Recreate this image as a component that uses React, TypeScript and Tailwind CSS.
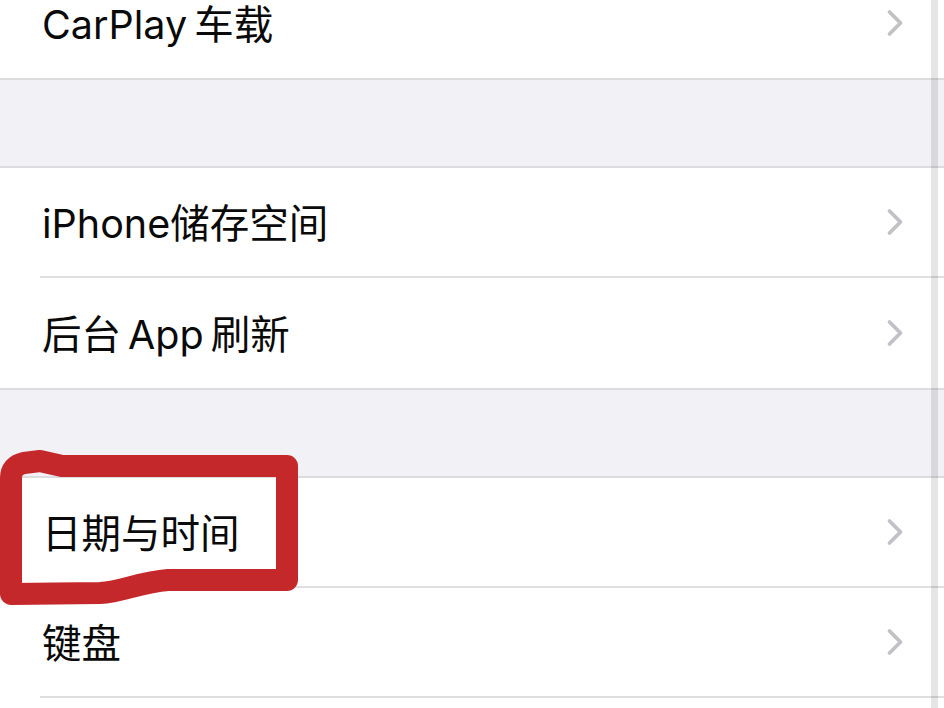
import React from "react";

const rows1 = ["iPhone储存空间", "后台 App 刷新"];
const rows2 = ["日期与时间", "键盘"];

function Chevron() {
  return (
    <svg width="18" height="28" viewBox="0 0 18 28" className="shrink-0">
      <path
        d="M3.5 3 L14.5 14 L3.5 25"
        stroke="#c2c2c6"
        strokeWidth="3.8"
        fill="none"
        strokeLinecap="round"
        strokeLinejoin="round"
      />
    </svg>
  );
}

function Row({ title, last }: { title: string; last?: boolean }) {
  return (
    <div className="pl-[40px] bg-white">
      <div
        className={
          "flex items-center justify-between h-[110px] pl-[2px] pr-[40px] " +
          (last ? "" : "border-b-2 border-[#dfdfe1]")
        }
      >
        <p className="text-[39.5px] text-[#0a0a0a] leading-none pt-[5px] [word-spacing:-4px]">
          {title}
        </p>
        <Chevron />
      </div>
    </div>
  );
}

function Gap() {
  return <div className="h-[90px] bg-[#f2f1f6] border-y-2 border-[#dcdcdf]" />;
}

export default function App() {
  return (
    <div
      className="relative w-[944px] h-[708px] overflow-hidden bg-white"
      style={{ fontFamily: 'Inter, "Noto Sans CJK SC", sans-serif' }}
    >
      <div className="-mt-[32px]">
        <Row title="CarPlay 车载" last />
        <Gap />
        {rows1.map((t, i) => (
          <Row key={t} title={t} last={i === rows1.length - 1} />
        ))}
        <Gap />
        {rows2.map((t) => (
          <Row key={t} title={t} />
        ))}
      </div>

      {/* edge strip on the right side of the screenshot */}
      <div className="absolute top-0 bottom-0 left-[931px] w-[7px] bg-black/[0.1]" />

      {/* hand-drawn red highlight */}
      <svg className="absolute inset-0" width="944" height="708" viewBox="0 0 944 708">
        <path
          d="M11 594 L11 478 Q11 466 24 463 L40 461 L62 466 L287 466 L287 580 L168 580 C140 582 122 592 100 593 L11 594 Z"
          stroke="#c5282b"
          strokeWidth="22"
          fill="none"
          strokeLinecap="round"
          strokeLinejoin="round"
        />
      </svg>
    </div>
  );
}
